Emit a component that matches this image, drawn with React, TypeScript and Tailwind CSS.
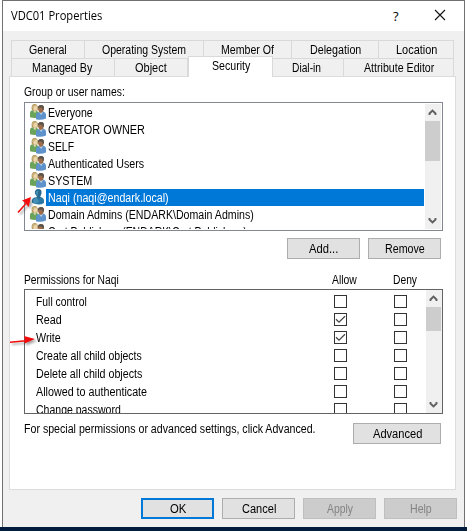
import { useLayoutEffect, useRef, useState } from "react";
import type { ReactNode } from "react";

// A single line of label text, condensed horizontally to the given width.
function Label({ w, children, className = "" }: { w: number; children: string; className?: string }) {
  const ref = useRef<HTMLSpanElement>(null);
  const [scale, setScale] = useState(1);
  useLayoutEffect(() => {
    if (ref.current) setScale(w / ref.current.offsetWidth);
  }, [w]);
  return (
    <span className={`block h-[14px] shrink-0 leading-[14px] whitespace-nowrap ${className}`} style={{ width: w }}>
      <span ref={ref} className="inline-block origin-left" style={{ transform: `scaleX(${scale})` }}>
        {children}
      </span>
    </span>
  );
}

function Tab({ name, w, className }: { name: string; w: number; className: string }) {
  return (
    <div className={`flex shrink-0 justify-center border-t border-r border-[#d9d9d9] ${className}`}>
      <Label w={w}>{name}</Label>
    </div>
  );
}

function GroupIcon() {
  return (
    <svg className="h-4 w-4 shrink-0" viewBox="0 0 16 16">
      <path d="M0 13.2V8.5C.4 7 1.6 6.500 3 6.300L6.500 6.600 9 9v4.600Q4 14.600 0 13.200Z" fill="#6ca35a" />
      <path d="M3 6.400 5 9.300 6.700 6.300Z" fill="#dce3bd" />
      <path d="M1.800 5.800C1 2 2.600 0 4.800.100 7.300.100 8.400 2.200 7.700 6.200L6.200 7.300 3.200 6.900Z" fill="#b39a62" />
      <ellipse cx="5.200" cy="3.900" rx="2" ry="2.900" fill="#ecd6ac" />
      <path d="M2 3.600C2.400 1 5.500-.400 7.200 2 5.200 1.700 4 2.200 3.200 4.600Z" fill="#cdb67c" />
      <path d="M6 15.200V10.500Q6.400 8.500 9.200 7.900L13.300 7.500Q16 8.300 16 10.500V14.500Q11 16.600 6 15.200Z" fill="#5d92cb" />
      <path d="M9 8.200 11.200 11 13.400 7.600Z" fill="#b7d1e8" />
      <path d="M8.100 5.500C7.600 2.700 8.800 1.200 11 1.200 13.600 1.200 14.500 3 13.800 5.600L12.900 8 10.900 9 9 8Z" fill="#9c6c4b" />
      <path d="M8 4.500C7.500 2 9 .800 11 .900 13.700.900 14.500 2.800 13.700 5.600L12.700 6.100 12.300 3.700 9.100 3.500Z" fill="#5b544c" />
    </svg>
  );
}

function UserIcon() {
  return (
    <svg className="h-4 w-4 shrink-0" viewBox="0 0 16 16">
      <path d="M2 13.800V11.200Q2.300 8.700 6 8.300L10.500 8Q14 9 14 11.500V14Q9 17.300 2 13.800Z" fill="#2c78a5" />
      <path d="M3 11Q4 9 7 9L9.200 12.500 6 14.500 3 13.500Z" fill="#4590b6" />
      <path d="M4.900 4.600C4.500 1.600 6 .100 8.300.100 11 .100 12.100 2 11.400 5L10.300 7.600V9L8.500 10.100 6.800 8.700V7.500Z" fill="#286a90" />
      <path d="M5.500 4C5.600 2.200 7 1.400 8.500 2 7.700 3.600 8 6.500 7.600 7.600Z" fill="#438fb0" />
    </svg>
  );
}

function Chevron({ up = false }: { up?: boolean }) {
  return (
    <svg className="h-[17px] w-4 shrink-0" viewBox="0 0 16 17">
      <path
        d={up ? "M4.500 11V9.500L7.500 6.500 10.500 9.500V11" : "M4.500 6V7.500L7.500 10.500 10.500 7.500V6"}
        fill="none"
        stroke="#606060"
        strokeWidth="1.900"
      />
    </svg>
  );
}

function ScrollBar({ thumb }: { thumb: string }) {
  return (
    <div className="flex w-4 shrink-0 flex-col bg-[#f0f0f0]">
      <Chevron up />
      <div className={`w-[15px] bg-[#cdcdcd] ${thumb}`} />
      <div className="grow" />
      <Chevron />
    </div>
  );
}

function Button({ label, w, className = "w-[73px]", look = "border border-[#adadad] bg-[#e1e1e1]" }: {
  label: string;
  w: number;
  className?: string;
  look?: string;
}) {
  return (
    <button className={`flex h-[21px] shrink-0 items-center justify-center ${className} ${look}`}>
      <Label w={w}>{label}</Label>
    </button>
  );
}

function Check({ on = false }: { on?: boolean }) {
  return (
    <span className="block h-[13px] w-[13px] shrink-0 border border-[#333] bg-white">
      {on && (
        <svg className="block h-[11px] w-[11px]" viewBox="0 0 11 11">
          <path d="M1 5.300 4 8.200 10 2.300" fill="none" stroke="#444" strokeWidth="1.200" />
        </svg>
      )}
    </span>
  );
}

function Row({ children, selected = false, label, w }: { children: ReactNode; selected?: boolean; label: string; w: number }) {
  return (
    <div className="flex h-[17px] shrink-0 pl-[4px]">
      {children}
      <div className={`grow pt-[2px] pl-[2px] ${selected ? "bg-[#0078d7] text-white" : ""}`}>
        <Label w={w}>{label}</Label>
      </div>
    </div>
  );
}

const users: [string, number][] = [
  ["Everyone", 45],
  ["CREATOR OWNER", 97],
  ["SELF", 26],
  ["Authenticated Users", 96],
  ["SYSTEM", 44],
  ["Naqi (naqi@endark.local)", 121],
  ["Domain Admins (ENDARK\\Domain Admins)", 206],
  ["Cert Publishers (ENDARK\\Cert Publishers)", 199],
];

const permissions: [string, number, boolean][] = [
  ["Full control", 51, false],
  ["Read", 26, true],
  ["Write", 25, true],
  ["Create all child objects", 106, false],
  ["Delete all child objects", 106, false],
  ["Allowed to authenticate", 111, false],
  ["Change password", 85, false],
];

export default function App() {
  return (
    <div className="relative flex h-[531px] w-[467px] flex-col overflow-hidden bg-white font-['Liberation_Sans',Arial,sans-serif] text-[12px] text-black">
      <div className="ml-[2px] flex h-[527px] w-[463px] flex-col border-x border-t border-[#707070] bg-[#f0f0f0]">
        <header className="flex h-[30px] shrink-0 items-start bg-white pt-[8px] pl-[8px] font-['Open_Sans','Noto_Sans',sans-serif] text-black">
          <Label w={91}>VDC01 Properties</Label>
          <span className="ml-[291px] h-[14px] w-[8px] text-[13px] leading-[14px] font-medium">?</span>
          <svg className="ml-[33px] h-[12px] w-[12px]" viewBox="0 0 12 12">
            <path d="M1 1 11 11M11 1 1 11" stroke="#111" strokeWidth="1.100" />
          </svg>
        </header>

        <div className="mt-[9px] ml-[8px] flex h-[18px] w-[443px] shrink-0 border-l border-[#d9d9d9]">
          <Tab name="General" w={38} className="w-[73px] pt-[2px]" />
          <Tab name="Operating System" w={84} className="w-[119px] pt-[2px]" />
          <Tab name="Member Of" w={53} className="w-[88px] pt-[2px]" />
          <Tab name="Delegation" w={51} className="w-[87px] pt-[2px]" />
          <Tab name="Location" w={41} className="w-[75px] pt-[2px]" />
        </div>
        <div className="relative z-10 ml-[8px] flex h-[18px] w-[443px] shrink-0 items-end border-l border-[#d9d9d9]">
          <Tab name="Managed By" w={60} className="h-[18px] w-[103px] pt-[2px] pr-[2px]" />
          <Tab name="Object" w={32} className="h-[18px] w-[73px] pt-[2px]" />
          <Tab name="Security" w={38} className="-mb-px h-[21px] w-[85px] border-l bg-white pt-[2px]" />
          <Tab name="Dial-in" w={29} className="h-[18px] w-[71px] pt-[2px] pr-[3px]" />
          <Tab name="Attribute Editor" w={70} className="h-[18px] w-[110px] pt-[2px]" />
        </div>

        <main className="ml-[6px] flex h-[414px] w-[447px] shrink-0 flex-col border border-[#dcdcdc] bg-white pl-[14px]">
          <div className="flex h-[25px] shrink-0 pt-[8px]">
            <Label w={101}>Group or user names:</Label>
          </div>
          <div className="flex h-[129px] w-[419px] shrink-0 overflow-hidden border border-[#828790] p-px">
            <div className="h-[125px] w-[398px] shrink-0 overflow-hidden">
              {users.map(([name, w], i) => (
                <Row key={name} label={name} w={w} selected={i === 5}>
                  {i === 5 ? <UserIcon /> : <GroupIcon />}
                </Row>
              ))}
            </div>
            <div className="ml-px flex">
              <ScrollBar thumb="h-[40px]" />
            </div>
          </div>
          <div className="mt-[7px] ml-[263px] flex shrink-0 gap-2">
            <Button label="Add..." w={29} />
            <Button label="Remove" w={40} />
          </div>
          <div className="mt-[14px] flex h-[16px] shrink-0">
            <Label w={95}>Permissions for Naqi</Label>
            <Label w={25} className="ml-[213px]">Allow</Label>
            <Label w={24} className="ml-[36px]">Deny</Label>
          </div>
          <div className="flex h-[125px] w-[419px] shrink-0 overflow-hidden border border-[#646464]">
            <div className="h-[123px] w-[401px] shrink-0 overflow-hidden pt-[5px] pl-[11px]">
              {permissions.map(([name, w, allow]) => (
                <div key={name} className="flex h-[18px]">
                  <div className="w-[298px] shrink-0">
                    <Label w={w}>{name}</Label>
                  </div>
                  <Check on={allow} />
                  <div className="w-[47px] shrink-0" />
                  <Check />
                </div>
              ))}
            </div>
            <ScrollBar thumb="h-[24px]" />
          </div>
          <div className="flex pt-[8px]">
            <Label w={292}>For special permissions or advanced settings, click Advanced.</Label>
            <div className="mt-px ml-[37px]">
              <Button label="Advanced" w={49} className="w-[88px]" />
            </div>
          </div>
        </main>

        <footer className="mt-[8px] ml-[138px] flex shrink-0 gap-2">
          <Button label="OK" w={16} look="border-2 border-[#0078d7] bg-[#e1e1e1]" />
          <Button label="Cancel" w={34} />
          <Button label="Apply" w={26} look="border border-[#bfbfbf] bg-[#ccc] text-[#838383]" />
          <Button label="Help" w={22} look="border border-[#bfbfbf] bg-[#ccc] text-[#838383]" />
        </footer>
      </div>
      <div className="h-1 w-full shrink-0 bg-[#001c3c]" />

      {/* Annotation arrows laid over the dialog */}
      <svg className="pointer-events-none absolute top-0 left-0 z-20 h-[531px] w-[467px] drop-shadow-[2px_2px_1px_rgba(0,0,0,0.35)]" viewBox="0 0 467 531">
        <path d="M18 212.500 26 203.500M10 342.300 26 340.800" stroke="#f50b0b" strokeWidth="1.500" />
        <path d="M31 197 22 200.500 25.500 203 28.500 207ZM35 339 24 336 25 340 24.500 343.500Z" fill="#f50b0b" />
      </svg>
    </div>
  );
}
